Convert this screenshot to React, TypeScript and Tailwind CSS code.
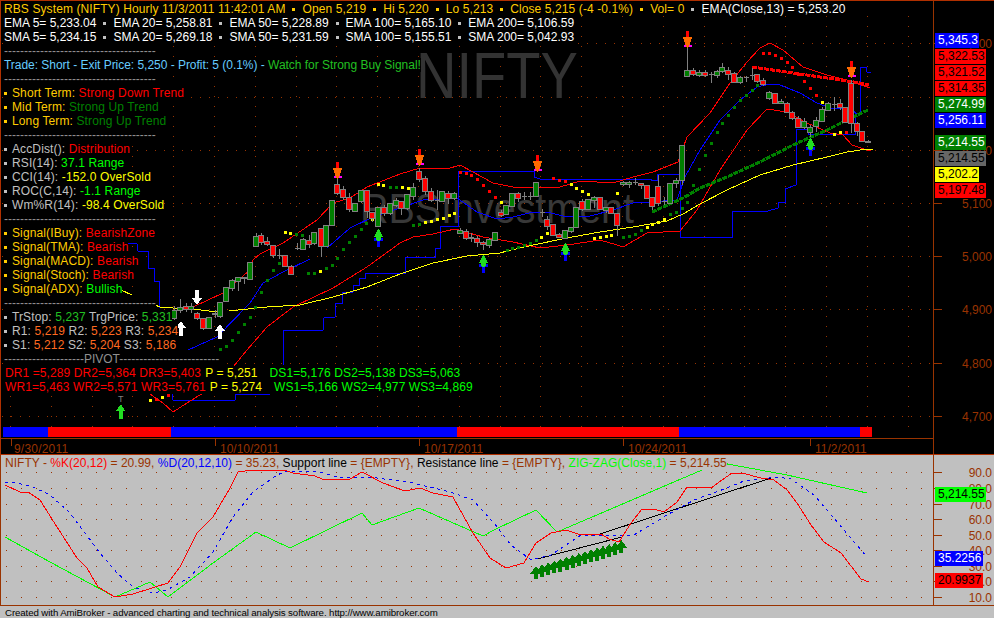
const axisColor = '#993300';

// x, wick top, body top, body bottom, wick bottom, color (g green, r red)
const candles: [number, number, number, number, number, string][] = [
  [174, 306, 310, 318, 320, 'g'], [180, 299, 307, 310, 313, 'g'], [186, 303, 306, 309, 312, 'r'], [191, 303, 306, 309, 313, 'g'],
  [197, 312, 313, 318, 320, 'r'], [203, 318, 318, 328, 330, 'r'], [209, 317, 317, 328, 329, 'g'], [215, 310, 313, 314, 318, 'g'],
  [220, 302, 302, 316, 318, 'g'], [226, 287, 287, 301, 302, 'g'], [232, 279, 280, 288, 291, 'g'], [238, 277, 277, 281, 291, 'g'],
  [244, 277, 277, 278, 284, 'g'], [250, 262, 262, 279, 279, 'g'], [256, 233, 236, 246, 247, 'g'], [261, 233, 235, 242, 245, 'r'],
  [267, 237, 241, 244, 246, 'r'], [273, 245, 245, 255, 258, 'r'], [279, 249, 255, 255, 259, 'g'], [285, 255, 255, 266, 267, 'r'],
  [291, 265, 266, 274, 275, 'r'], [297, 243, 248, 248, 250, 'g'], [303, 238, 239, 249, 250, 'g'], [309, 235, 240, 244, 248, 'r'],
  [314, 232, 232, 243, 245, 'g'], [321, 228, 228, 246, 257, 'r'], [326, 225, 225, 246, 247, 'g'], [332, 200, 200, 225, 226, 'g'],
  [337, 179, 184, 193, 195, 'r'], [343, 186, 189, 197, 200, 'r'], [349, 193, 197, 209, 212, 'r'], [355, 203, 203, 211, 212, 'g'],
  [361, 190, 190, 201, 203, 'g'], [367, 190, 190, 211, 218, 'r'], [372, 212, 212, 218, 222, 'r'], [378, 207, 207, 226, 226, 'g'],
  [384, 205, 207, 213, 216, 'r'], [390, 203, 203, 213, 215, 'g'], [396, 198, 200, 205, 207, 'g'], [401, 201, 201, 208, 215, 'r'],
  [407, 194, 194, 208, 210, 'g'], [413, 183, 187, 196, 200, 'g'], [419, 168, 171, 179, 182, 'r'], [425, 176, 178, 191, 195, 'r'],
  [431, 188, 191, 200, 202, 'r'], [437, 190, 200, 200, 210, 'g'], [442, 191, 191, 201, 202, 'g'], [448, 191, 193, 198, 204, 'r'],
  [454, 192, 193, 198, 200, 'g'], [460, 228, 230, 233, 234, 'g'], [466, 229, 231, 238, 240, 'r'], [471, 233, 237, 238, 242, 'g'],
  [477, 236, 238, 242, 247, 'r'], [483, 241, 242, 244, 250, 'r'], [489, 238, 239, 245, 248, 'g'], [495, 232, 232, 240, 241, 'g'],
  [501, 210, 212, 215, 217, 'r'], [506, 205, 205, 214, 215, 'g'], [512, 193, 193, 206, 207, 'g'], [518, 192, 193, 198, 202, 'r'],
  [524, 192, 196, 196, 200, 'g'], [530, 192, 196, 196, 200, 'g'], [536, 182, 182, 196, 197, 'g'], [542, 209, 212, 212, 217, 'g'],
  [547, 216, 219, 226, 230, 'r'], [553, 224, 224, 235, 236, 'r'], [559, 233, 234, 237, 238, 'r'], [565, 230, 230, 238, 239, 'g'],
  [571, 227, 227, 231, 233, 'g'], [576, 207, 207, 227, 228, 'g'], [582, 199, 201, 209, 211, 'r'], [588, 199, 199, 209, 210, 'g'],
  [594, 196, 197, 200, 208, 'g'], [600, 197, 197, 209, 210, 'r'], [606, 207, 207, 210, 213, 'g'], [611, 207, 207, 213, 214, 'r'],
  [617, 213, 213, 225, 236, 'r'], [623, 181, 182, 184, 186, 'g'], [629, 181, 182, 184, 188, 'g'], [635, 178, 182, 182, 185, 'g'],
  [641, 183, 183, 185, 189, 'r'], [647, 185, 185, 198, 199, 'r'], [652, 197, 197, 206, 210, 'r'], [658, 175, 186, 203, 206, 'r'],
  [664, 197, 201, 201, 205, 'g'], [670, 183, 183, 203, 204, 'g'], [676, 178, 180, 183, 188, 'g'], [682, 145, 145, 180, 185, 'g'],
  [687, 48, 70, 76, 77, 'g'], [693, 68, 70, 74, 76, 'r'], [699, 70, 72, 75, 77, 'g'], [705, 70, 72, 75, 77, 'r'],
  [711, 72, 74, 74, 83, 'g'], [717, 70, 71, 75, 78, 'g'], [722, 63, 67, 71, 73, 'g'], [728, 67, 70, 74, 80, 'r'],
  [734, 72, 73, 82, 83, 'r'], [740, 76, 77, 82, 84, 'g'], [746, 76, 77, 77, 82, 'g'], [752, 68, 75, 75, 80, 'g'],
  [757, 74, 74, 81, 83, 'r'], [763, 78, 80, 84, 86, 'r'], [769, 91, 92, 98, 100, 'g'], [775, 93, 93, 103, 104, 'r'],
  [781, 99, 101, 103, 104, 'g'], [787, 102, 103, 112, 113, 'r'], [792, 111, 112, 118, 120, 'r'], [798, 116, 118, 127, 128, 'r'],
  [804, 118, 121, 127, 129, 'g'], [810, 125, 127, 132, 137, 'g'], [816, 117, 120, 126, 132, 'g'], [822, 107, 109, 121, 122, 'g'],
  [828, 102, 103, 110, 111, 'g'], [834, 97, 104, 104, 111, 'g'], [840, 99, 103, 107, 110, 'r'], [845, 107, 107, 122, 123, 'r'],
  [851, 80, 83, 123, 133, 'r'], [857, 122, 123, 131, 136, 'r'], [862, 131, 131, 141, 142, 'r'], [868, 140, 141, 142, 143, 'r'],
];

const yellowMa = ['121,290 132,295', '138,298 160,307 173,308 193,309 217,312', '229,311 267,307 300,305 333,297 367,287 400,274 433,263 467,256 500,253 507,251 533,245 567,238 600,232 633,227 667,221 683,214 700,204 727,190 760,175 793,165 827,157 847,152 867,149 873,150'];
const blueMa = ['188,350 217,337 250,303 263,283 283,272 310,259', '327,248 350,228 373,217 400,208 423,200 457,198 477,212 497,219 513,217 533,212 547,212 567,217 590,216 613,210 633,203 650,202 677,200 685,177 700,150 720,120 740,100 757,87 770,84 780,85 800,93 817,103 833,109 847,108 860,115'];
const redBands = [
  '150,394 163,403 173,412 187,403 203,393',
  '193,307 223,293 250,270 253,260 260,254 283,243 317,220 333,203 350,198 367,187 400,174 420,168 447,169 460,165 473,172 493,183 513,187 533,187 560,187 580,181 613,183 633,177 653,172 678,162 687,137 710,113 730,83 747,62 760,48 770,43 783,50 803,67 827,75 847,80 870,88',
  '233,367 247,350 267,327 293,307 333,288 367,267 400,243 413,237 433,234 455,229 483,237 513,242 540,248 567,245 600,240 617,245 623,247 647,233 680,231 697,210 720,170 747,130 767,109 787,112 807,123 830,133 843,135 852,145 867,150 871,151',
];
const blueSteps = [
  '100,243 137,244 138,251 148,251 148,268 154,268 154,281 159,281 159,308',
  '172,394 173,400 235,400 236,394 270,394',
  '283,365 283,330 323,330 324,318 335,317 336,303 342,303 342,293 353,292 353,285 359,285 359,278 365,278 365,273 405,273 405,257 435,257 435,248 440,248 440,226 458,226 458,171 534,171 534,177 540,179 651,179 651,180 657,180 657,174 680,174 680,237 732,237 732,212 768,211 778,208 779,202 785,202 785,189 796,185 796,129 808,129 808,134 855,134 855,114 860,113 861,67 866,67 867,72 871,72',
];

const dots: [number, number, string][] = [
  [220, 349, 'g'], [226, 346, 'g'], [232, 340, 'g'], [238, 332, 'g'], [244, 324, 'g'], [250, 317, 'g'], [255, 307, 'g'], [261, 292, 'g'], [267, 280, 'g'], [273, 270, 'g'], [279, 263, 'g'],
  [285, 232, 'y'], [290, 233, 'y'], [296, 234, 'g'], [302, 235, 'g'], [308, 273, 'g'], [314, 273, 'g'], [320, 271, 'y'], [326, 268, 'g'], [332, 265, 'g'], [337, 258, 'g'], [343, 249, 'g'], [349, 242, 'g'], [355, 236, 'g'], [361, 229, 'g'], [366, 223, 'g'], [372, 219, 'y'],
  [378, 184, 'y'], [383, 185, 'y'], [390, 187, 'g'], [396, 187, 'g'], [402, 187, 'y'], [408, 188, 'y'], [413, 225, 'g'], [419, 224, 'g'], [425, 222, 'y'], [431, 221, 'y'], [437, 219, 'y'], [443, 218, 'y'], [449, 215, 'y'], [454, 213, 'y'],
  [460, 172, 'r'], [466, 173, 'r'], [471, 175, 'r'], [477, 179, 'r'], [483, 185, 'r'], [489, 191, 'r'], [495, 197, 'r'], [501, 202, 'y'],
  [507, 250, 'g'], [512, 248, 'g'], [518, 247, 'g'], [524, 245, 'g'], [530, 243, 'g'], [536, 240, 'g'], [541, 237, 'y'], [547, 233, 'y'],
  [553, 178, 'r'], [559, 180, 'r'], [565, 181, 'r'], [571, 184, 'y'], [576, 188, 'y'], [582, 191, 'y'], [588, 194, 'y'], [594, 238, 'y'], [600, 237, 'y'], [606, 236, 'y'], [611, 235, 'y'], [617, 193, 'y'],
  [623, 237, 'g'], [629, 236, 'g'], [635, 234, 'g'], [641, 230, 'g'], [647, 227, 'y'], [652, 224, 'y'], [658, 222, 'y'], [664, 219, 'y'], [670, 214, 'g'], [676, 212, 'g'], [682, 208, 'g'], [687, 202, 'g'], [693, 185, 'g'], [699, 169, 'g'],
  [705, 155, 'g'], [711, 143, 'g'], [717, 132, 'g'], [722, 123, 'g'], [728, 115, 'g'], [734, 107, 'g'], [740, 100, 'g'], [746, 95, 'g'], [752, 90, 'g'], [757, 85, 'g'],
  [763, 53, 'r'], [769, 53, 'r'], [775, 55, 'r'], [781, 58, 'r'], [787, 62, 'r'], [792, 67, 'r'], [798, 74, 'r'], [804, 81, 'r'], [810, 88, 'r'], [816, 95, 'r'], [822, 102, 'y'],
  [834, 134, 'y'], [840, 132, 'y'], [846, 132, 'r'],
  [150, 400, 'y'], [156, 399, 'r'], [162, 397, 'y'], [168, 395, 'r'],
];
const dotColors: Record<string, string> = { g: '#008000', y: '#ffff00', r: '#ff0000' };

const gridX = Array.from({ length: 23 }, (_, i) => Math.round(10 + i * 40.8) + 0.5);
const gridY = [43, 97, 150, 203, 256, 309, 363, 416];
const priceAxis: [string, number][] = [['5,300', 43], ['5,200', 150], ['5,100', 203], ['5,000', 256], ['4,900', 309], ['4,800', 363], ['4,700', 416]];
const osc: [string, number][] = [['90.0', 472], ['80.0', 488], ['70.0', 504], ['60.0', 519], ['50.0', 535], ['40.0', 550], ['30.0', 566], ['20.0', 581], ['10.0', 597]];

const kLine = '5,485 20,492 28,492 40,500 57,527 77,558 87,568 98,587 115,597 133,594 152,588 168,583 180,567 197,533 213,517 230,488 238,472 253,470 263,470 287,471 293,473 315,476 322,479 350,479 362,472 383,483 405,491 420,488 433,493 453,497 473,533 490,558 506,568 524,563 536,543 551,533 566,530 581,535 601,534 609,539 619,542 631,523 642,509 654,509 664,512 677,502 687,487 711,488 722,480 732,473 742,473 761,478 774,480 787,490 797,503 811,525 824,542 841,553 861,579 869,582';
const dLine = '5,482 17,483 33,487 50,495 70,513 100,553 117,573 133,587 153,593 167,590 190,577 213,552 233,517 253,492 277,475 287,471 300,471 320,472 337,477 370,477 413,483 450,492 473,500 494,523 511,545 531,560 551,555 581,535 634,535 667,515 694,500 727,488 744,481 777,477 791,479 814,495 827,510 867,557';
const zigzag = '5,537 50,562 115,597 150,582 168,597 213,563 256,532 290,548 362,513 372,525 419,508 483,536 494,530 536,510 557,532 702,470 722,463 787,475 867,493';

const tags: [string, string][] = [
  ['5,345.3', 'w-[44px] mb-px bg-[#0000ff] text-white'],
  ['5,322.53', 'w-[51px] mb-px bg-[#ff0000] text-black'],
  ['5,321.52', 'w-[51px] mb-px bg-[#ff0000] text-black'],
  ['5,314.35', 'w-[51px] mb-px bg-[#ff0000] text-black'],
  ['5,274.99', 'w-[51px] mb-px bg-[#008000] text-white'],
  ['5,256.11', 'w-[51px] mb-[7px] bg-[#0000ff] text-white'],
  ['5,214.55', 'w-[51px] mb-px bg-[#008000] text-white'],
  ['5,214.55', 'w-[51px] mb-px bg-[#666666] text-black'],
  ['5,202.2', 'w-[44px] mb-px bg-[#ffff00] text-black'],
  ['5,197.48', 'w-[51px] bg-[#ff0000] text-black'],
];

function Dot({ className = 'mx-[7px]' }: { className?: string }) {
  return <span className={`inline-block w-[3px] h-[3px] bg-current align-middle ${className}`} />;
}

function Sep({ children }: { children?: string }) {
  return <div className="text-[#909090]">{children ?? '--------------------------------------'}</div>;
}

function Item({ dot, children }: { dot: string; children: React.ReactNode }) {
  return (
    <div className="tracking-[0.12px]">
      <span className={dot}>
        <Dot className="mr-[5px]" />
      </span>
      {children}
    </div>
  );
}

function DownArrow({ x, y }: { x: number; y: number }) {
  return (
    <g>
      <rect x={x - 3} y={y + 14} width={8} height={2} fill="#ff00ff" />
      <rect x={x - 1} y={y} width={3} height={6} fill="#ff0000" />
      <polygon points={`${x - 4},${y + 6} ${x + 5},${y + 6} ${x + 4},${y + 10} ${x + 2},${y + 15} ${x + 1},${y + 17} ${x},${y + 17} ${x - 1},${y + 15} ${x - 3},${y + 10}`} fill="#ff6a00" />
    </g>
  );
}

function UpArrow({ x, y }: { x: number; y: number }) {
  return (
    <g>
      <rect x={x - 4} y={y + 9} width={9} height={3} fill="#0000ff" />
      <rect x={x - 1} y={y + 9} width={3} height={9} fill="#0000ff" />
      <polygon points={`${x},${y} ${x + 1},${y} ${x + 5},${y + 8} ${x + 3},${y + 8} ${x + 3},${y + 10} ${x + 2},${y + 12} ${x - 1},${y + 12} ${x - 2},${y + 10} ${x - 2},${y + 8} ${x - 4},${y + 8}`} fill="#22dd22" />
    </g>
  );
}

function WhiteArrow({ x, y, down }: { x: number; y: number; down?: boolean }) {
  const pts = down
    ? `${x - 2},${y} ${x + 2},${y} ${x + 2},${y + 8} ${x + 5},${y + 8} ${x},${y + 15} ${x - 5},${y + 8} ${x - 2},${y + 8}`
    : `${x},${y} ${x + 5},${y + 7} ${x + 2},${y + 7} ${x + 2},${y + 15} ${x - 2},${y + 15} ${x - 2},${y + 7} ${x - 5},${y + 7}`;
  return <polygon points={pts} fill="#ffffff" />;
}

function PriceChart() {
  return (
    <svg className="block" width={932} height={426} viewBox="1 1 932 426" fontFamily="'Liberation Sans', sans-serif" shapeRendering="crispEdges">
      {gridY.map((y) => (
        <line key={y} x1={2} x2={933} y1={y + 0.5} y2={y + 0.5} stroke={axisColor} strokeDasharray="1 8" />
      ))}
      {gridX.map((x) => (
        <line key={x} x1={x} x2={x} y1={16} y2={427} stroke={axisColor} strokeDasharray="1 9" />
      ))}
      <text x={416} y={98} fontSize={64} fill="#333333" textLength={162} lengthAdjust="spacingAndGlyphs">NIFTY</text>
      <text x={360} y={223} fontSize={42} fill="#383838" textLength={274} lengthAdjust="spacingAndGlyphs">RBSInvestment</text>

      {blueSteps.map((p) => (
        <polyline key={p} points={p} fill="none" stroke="#0000ff" strokeWidth={1} />
      ))}
      {redBands.map((p) => (
        <polyline key={p} points={p} fill="none" stroke="#ff0000" strokeWidth={1} />
      ))}
      {blueMa.map((p) => (
        <polyline key={p} points={p} fill="none" stroke="#0000ff" strokeWidth={1} />
      ))}
      {yellowMa.map((p) => (
        <polyline key={p} points={p} fill="none" stroke="#ffff00" strokeWidth={1} />
      ))}
      <polyline points="652,212 683,198 700,188 727,177 760,162 793,145 827,130 847,120 868,110" fill="none" stroke="#008000" strokeWidth={3} strokeDasharray="5 1" />
      <polyline points="752,67 793,73 827,78 860,83 869,85" fill="none" stroke="#ff0000" strokeWidth={3} strokeDasharray="5 1" />

      {dots.map(([x, y, c]) => (
        <rect key={`${x}-${y}`} x={x - 1} y={y - 1} width={3} height={3} fill={dotColors[c]} />
      ))}

      {candles.map(([x, wt, t, b, wb, c]) => (
        <g key={x}>
          <line x1={x + 0.5} x2={x + 0.5} y1={wt} y2={wb} stroke="#808080" />
          {b > t ? (
            <rect x={x - 2.5} y={t + 0.5} width={5} height={b - t} fill={c === 'g' ? '#008000' : '#ff0000'} stroke="#808080" />
          ) : (
            <line x1={x - 2} x2={x + 3} y1={t + 0.5} y2={t + 0.5} stroke="#808080" />
          )}
        </g>
      ))}

      {[[337, 162], [419, 149], [537, 155], [687, 31], [851, 61]].map(([x, y]) => (
        <DownArrow key={x} x={x} y={y} />
      ))}
      {[[378, 229], [483, 255], [565, 243], [810, 138]].map(([x, y]) => (
        <UpArrow key={x} x={x} y={y} />
      ))}
      <polygon points="121,404 125,411 123,411 123,419 119,419 119,411 116,411" fill="#22dd22" />
      <text x={118} y={402} fontSize={9} fill="#808080">T</text>
      <WhiteArrow x={197} y={290} down />
      <WhiteArrow x={181} y={321} />
      <WhiteArrow x={220} y={324} />
    </svg>
  );
}

function OscChart() {
  return (
    <svg className="block" width={932} height={150} viewBox="1 455 932 150" shapeRendering="crispEdges">
      {osc.map(([, y]) => (
        <line key={y} x1={6} x2={933} y1={y + 0.5} y2={y + 0.5} stroke={axisColor} strokeDasharray="1 14" />
      ))}
      <polyline points="537,559 622,537" fill="none" stroke="#000000" strokeWidth={1} />
      <polyline points="597,535 771,478" fill="none" stroke="#000000" strokeWidth={1} />
      <polyline points={zigzag} fill="none" stroke="#00ff00" strokeWidth={1} />
      <polyline points={dLine} fill="none" stroke="#0000ff" strokeWidth={1} strokeDasharray="3 4" />
      <polyline points={kLine} fill="none" stroke="#ff0000" strokeWidth={1} />
      {Array.from({ length: 15 }, (_, i) => {
        const x = 536 + i * 6.1;
        const y = 566 - i * 1.85;
        return (
          <polygon
            key={i}
            fill="#008000"
            points={`${x},${y} ${x + 6},${y + 8} ${x + 2},${y + 8} ${x + 2},${y + 13} ${x - 2},${y + 13} ${x - 2},${y + 8} ${x - 6},${y + 8}`}
          />
        );
      })}
    </svg>
  );
}

function AxisSvg({ top, height, marks }: { top: number; height: number; marks: [string, number][] }) {
  return (
    <svg className="block" width={60} height={height} viewBox={`934 ${top} 60 ${height}`} fontFamily="'Liberation Sans', sans-serif">
      {marks.map(([label, y]) => (
        <g key={label}>
          <line x1={934} x2={942} y1={y + 0.5} y2={y + 0.5} stroke={axisColor} />
          <text x={992} y={y + 5} textAnchor="end" fontSize={12} fill={axisColor}>{label}</text>
        </g>
      ))}
    </svg>
  );
}

export default function App() {
  return (
    <div className="w-[994px] h-[618px] overflow-hidden bg-[#c0c0c0] font-['Liberation_Sans',Arial,sans-serif] text-[12px] leading-[14px]">
      {/* Price pane */}
      <div className="relative h-[455px] flex bg-black border-l border-t border-b border-[#b03000]">
        <div className="w-[932px] flex flex-col">
          <PriceChart />
          <div className="h-[10px] ml-[2px] flex">
            <div className="w-[45px] bg-[#0000ff]" />
            <div className="w-[123px] bg-[#ff0000]" />
            <div className="w-[286px] bg-[#0000ff]" />
            <div className="w-[222px] bg-[#ff0000]" />
            <div className="w-[181px] bg-[#0000ff]" />
            <div className="w-[12px] bg-[#ff0000]" />
          </div>
          <div className="h-[16px] mt-px pl-[10px] flex border-t border-[#993300] text-[#993300]">
            <div className="w-[204px] pl-[2px] border-l border-[#993300] h-[7px] leading-[20px] tracking-[0.2px]">9/30/2011</div>
            <div className="w-[204px] pl-[4px] border-l border-[#993300] h-[7px] leading-[20px]">10/10/2011</div>
            <div className="w-[204px] pl-[4px] border-l border-[#993300] h-[7px] leading-[20px]">10/17/2011</div>
            <div className="w-[187px] pl-[4px] border-l border-[#993300] h-[7px] leading-[20px]">10/24/2011</div>
            <div className="pl-[4px] border-l border-[#993300] h-[7px] leading-[20px]">11/2/2011</div>
          </div>
        </div>
        <div className="w-[61px] border-l border-[#993300]">
          <AxisSvg top={1} height={453} marks={priceAxis} />
        </div>

        {/* Text block over the chart, each row hides what lies behind it */}
        <div className="absolute left-[3px] top-[1px] flex flex-col items-start whitespace-nowrap text-[#c0c0c0] [&>div]:bg-black">
          <div className="text-[#ffcc00] tracking-[0.1px]">
            RBS System (NIFTY) Hourly 11/3/2011 11:42:01 AM<Dot />Open 5,219<Dot />Hi 5,220<Dot />Lo 5,213<Dot />Close 5,215 (-4 -0.1%)<Dot />Vol= 0
            <span className="text-[#c0c0c0]"><Dot /></span>
            <span className="text-white">EMA(Close,13) = 5,253.20</span>
          </div>
          <div className="text-white">
            {['EMA 5= 5,233.04', 'EMA 20= 5,258.81', 'EMA 50= 5,228.89', 'EMA 100= 5,165.10', 'EMA 200= 5,106.59'].map((t, i) => (
              <span key={t}>{i > 0 && <span className="text-[#c0c0c0]"><Dot /></span>}{t}</span>
            ))}
          </div>
          <div className="text-white">
            {['SMA 5= 5,234.15', 'SMA 20= 5,269.18', 'SMA 50= 5,231.59', 'SMA 100= 5,155.51', 'SMA 200= 5,042.93'].map((t, i) => (
              <span key={t}>{i > 0 && <span className="text-[#c0c0c0]"><Dot /></span>}{t}</span>
            ))}
          </div>
          <Sep />
          <div className="tracking-[-0.03px]">
            <span className="text-[#66ccff]">Trade: Short - Exit Price: 5,250 - Profit: 5 (0.1%) - </span>
            <span className="text-[#22c022]">Watch for Strong Buy Signal!</span>
          </div>
          <Sep />
          <Item dot="text-[#ffcc00]"><span className="text-[#ffcc00]">Short Term: </span><span className="text-[#ff0000]">Strong Down Trend</span></Item>
          <Item dot="text-[#ffcc00]"><span className="text-[#ffcc00]">Mid Term: </span><span className="text-[#008000]">Strong Up Trend</span></Item>
          <Item dot="text-[#ffcc00]"><span className="text-[#ffcc00]">Long Term: </span><span className="text-[#008000]">Strong Up Trend</span></Item>
          <Sep />
          <Item dot="text-[#c0c0c0]">AccDist(): <span className="text-[#ff0000]">Distribution</span></Item>
          <Item dot="text-[#c0c0c0]">RSI(14): <span className="text-[#00ff00]">37.1 Range</span></Item>
          <Item dot="text-[#c0c0c0]">CCI(14): <span className="text-[#ffff00]">-152.0 OverSold</span></Item>
          <Item dot="text-[#c0c0c0]">ROC(C,14): <span className="text-[#00ff00]">-1.1 Range</span></Item>
          <Item dot="text-[#c0c0c0]">Wm%R(14): <span className="text-[#ffff00]">-98.4 OverSold</span></Item>
          <Sep />
          <Item dot="text-[#ffcc00]"><span className="text-[#ffcc00]">Signal(IBuy): </span><span className="text-[#ff0000]">BearishZone</span></Item>
          <Item dot="text-[#ffcc00]"><span className="text-[#ffcc00]">Signal(TMA): </span><span className="text-[#ff0000]">Bearish</span></Item>
          <Item dot="text-[#ffcc00]"><span className="text-[#ffcc00]">Signal(MACD): </span><span className="text-[#ff0000]">Bearish</span></Item>
          <Item dot="text-[#ffcc00]"><span className="text-[#ffcc00]">Signal(Stoch): </span><span className="text-[#ff0000]">Bearish</span></Item>
          <Item dot="text-[#ffcc00]"><span className="text-[#ffcc00]">Signal(ADX): </span><span className="text-[#00ff00]">Bullish</span></Item>
          <Sep />
          <Item dot="text-[#c0c0c0]">TrStop: <span className="text-[#22c022]">5,237</span> TrgPrice: <span className="text-[#22c022]">5,331</span></Item>
          <Item dot="text-[#c0c0c0]">R1: <span className="text-[#ff6a20]">5,219</span> R2: <span className="text-[#ff6a20]">5,223</span> R3: <span className="text-[#ff6a20]">5,234</span></Item>
          <Item dot="text-[#c0c0c0]">S1: <span className="text-[#ff6a20]">5,212</span> S2: <span className="text-[#ff6a20]">5,204</span> S3: <span className="text-[#ff6a20]">5,186</span></Item>
          <Sep>--------------------PIVOT-------------------------</Sep>
          <div className="tracking-[0.1px] ml-px">
            <span className="text-[#ff0000]">DR1 =5,289 DR2=5,364 DR3=5,403</span>
            <span className="text-[#ffff00] ml-[4px]">P = 5,251</span>
            <span className="text-[#00ff00] ml-[12px]">DS1=5,176 DS2=5,138 DS3=5,063</span>
          </div>
          <div className="tracking-[0.1px] ml-px">
            <span className="text-[#ff0000]">WR1=5,463 WR2=5,571 WR3=5,761</span>
            <span className="text-[#ffff00] ml-[4px]">P = 5,274</span>
            <span className="text-[#00ff00] ml-[12px]">WS1=5,166 WS2=4,977 WS3=4,869</span>
          </div>
        </div>

        {/* Last value tags on the price axis */}
        <div className="absolute left-[934px] top-[32px] flex flex-col text-[12px] leading-[15px]">
          {tags.map(([v, c], i) => (
            <div key={i} className={`h-[15px] pl-[3px] ${c}`}>{v}</div>
          ))}
        </div>
      </div>

      {/* Oscillator pane */}
      <div className="relative h-[151px] flex border-l border-b border-[#993300]">
        <div className="w-[932px]">
          <OscChart />
        </div>
        <div className="w-[61px] border-l border-[#993300]">
          <AxisSvg top={455} height={150} marks={osc} />
        </div>
        <div className="absolute left-[4px] top-[1px] whitespace-nowrap bg-[#c0c0c0] text-[#993300] tracking-[0.02px]">
          NIFTY - <span className="text-[#ff0000]">%K(20,12)</span> = 20.99, <span className="text-[#0000ff]">%D(20,12,10)</span> = 35.23, <span className="text-black">Support line</span> = {'{EMPTY}'}, <span className="text-black">Resistance line</span> = {'{EMPTY}'}, <span className="text-[#00ff00]">ZIG-ZAG(Close,1)</span> = 5,214.55
        </div>
        <div className="absolute left-[934px] top-[32px] flex flex-col leading-[15px]">
          <div className="w-[51px] h-[15px] pl-[3px] bg-[#00ff00] text-black mb-[49px]">5,214.55</div>
          <div className="w-[48px] h-[15px] pl-[3px] bg-[#0000ff] text-white mb-[7px]">35.2256</div>
          <div className="w-[48px] h-[15px] pl-[3px] bg-[#ff0000] text-black">20.9937</div>
        </div>
      </div>

      <div className="h-[12px] pl-[5px] text-[9.7px] leading-[13px] tracking-[-0.1px] text-black whitespace-nowrap">
        Created with AmiBroker - advanced charting and technical analysis software. http://www.amibroker.com
      </div>
    </div>
  );
}
